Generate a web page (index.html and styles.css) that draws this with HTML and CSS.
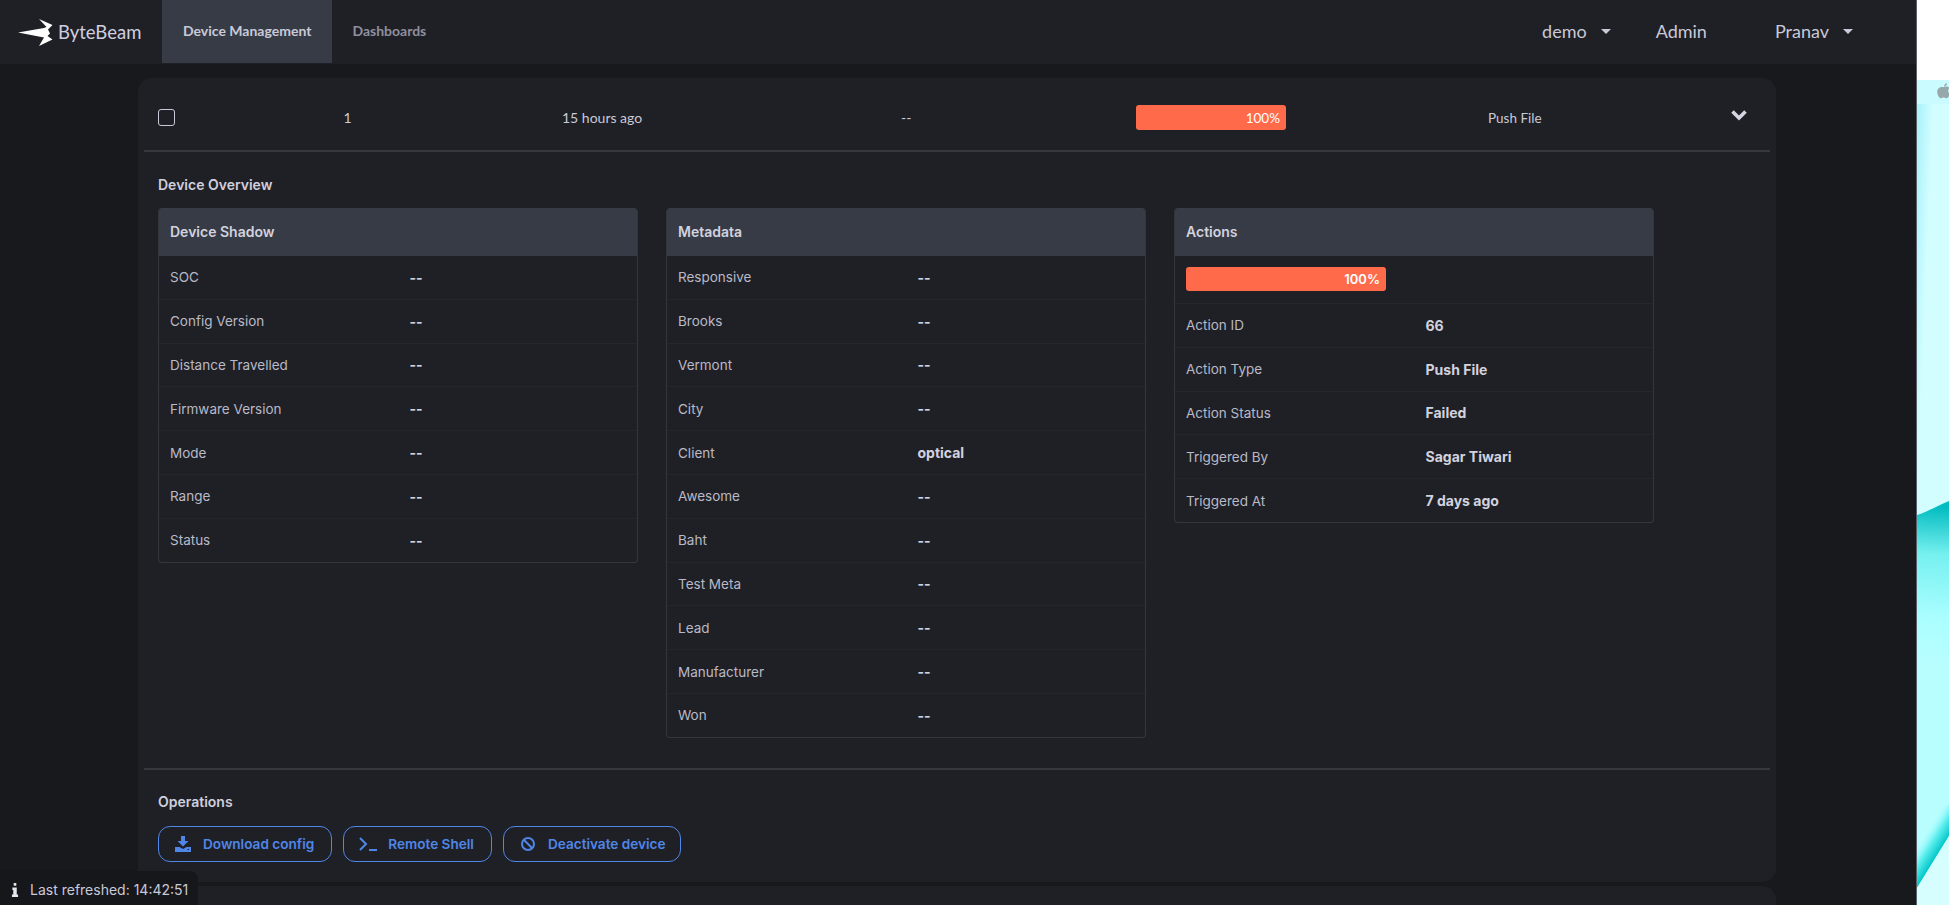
FILE: index.html
```html
<!DOCTYPE html>
<html lang="en">
<head>
<meta charset="utf-8">
<title>ByteBeam</title>
<link rel="stylesheet" href="styles.css">
</head>
<body>
<div class="app">
  <header class="nav">
    <div class="brand">
      <svg class="logo" viewBox="18 18 35 27" width="35" height="27"><path fill="#fff" d="M18 31.500 L44 27 L46.500 26 L39 18 L52.500 24 L48 28.500 L50 32.500 L47.500 35 L52.500 38.500 L39 45 L44 36.500 Z"/></svg>
      <span class="brand-name">ByteBeam</span>
    </div>
    <a class="tab tab-active">Device Management</a>
    <a class="tab">Dashboards</a>
    <div class="nav-right">
      <span class="menu menu-demo">demo<i class="caret"></i></span>
      <span class="menu menu-admin">Admin</span>
      <span class="menu menu-user">Pranav<i class="caret"></i></span>
    </div>
  </header>
  <main class="content">
    <section class="card">
      <div class="row-head">
        <span class="cell cell-check"><span class="checkbox"></span></span>
        <span class="cell cell-id">1</span>
        <span class="cell cell-time">15 hours ago</span>
        <span class="cell cell-dash">--</span>
        <span class="cell cell-prog"><span class="bar bar-small"><span>100%</span></span></span>
        <span class="cell cell-type">Push File</span>
        <span class="cell cell-chev"><svg viewBox="0 0 16 12" width="16" height="12"><path d="M1.500 2.500 L8 9 L14.500 2.500" fill="none" stroke="#d5d5e3" stroke-width="3.600"/></svg></span>
      </div>
      <div class="overview">
        <h3 class="heading">Device Overview</h3>
        <div class="tables">
          <div class="tbl">
            <div class="tbl-head">Device Shadow</div>
            <div class="tr"><span class="k">SOC</span><span class="v">--</span></div>
            <div class="tr"><span class="k">Config Version</span><span class="v">--</span></div>
            <div class="tr"><span class="k">Distance Travelled</span><span class="v">--</span></div>
            <div class="tr"><span class="k">Firmware Version</span><span class="v">--</span></div>
            <div class="tr"><span class="k">Mode</span><span class="v">--</span></div>
            <div class="tr"><span class="k">Range</span><span class="v">--</span></div>
            <div class="tr"><span class="k">Status</span><span class="v">--</span></div>
          </div>
          <div class="tbl">
            <div class="tbl-head">Metadata</div>
            <div class="tr"><span class="k">Responsive</span><span class="v">--</span></div>
            <div class="tr"><span class="k">Brooks</span><span class="v">--</span></div>
            <div class="tr"><span class="k">Vermont</span><span class="v">--</span></div>
            <div class="tr"><span class="k">City</span><span class="v">--</span></div>
            <div class="tr"><span class="k">Client</span><span class="v">optical</span></div>
            <div class="tr"><span class="k">Awesome</span><span class="v">--</span></div>
            <div class="tr"><span class="k">Baht</span><span class="v">--</span></div>
            <div class="tr"><span class="k">Test Meta</span><span class="v">--</span></div>
            <div class="tr"><span class="k">Lead</span><span class="v">--</span></div>
            <div class="tr"><span class="k">Manufacturer</span><span class="v">--</span></div>
            <div class="tr"><span class="k">Won</span><span class="v">--</span></div>
          </div>
          <div class="tbl">
            <div class="tbl-head">Actions</div>
            <div class="tr tr-bar"><span class="bar bar-large"><span>100%</span></span></div>
            <div class="tr"><span class="k">Action ID</span><span class="v">66</span></div>
            <div class="tr"><span class="k">Action Type</span><span class="v">Push File</span></div>
            <div class="tr"><span class="k">Action Status</span><span class="v">Failed</span></div>
            <div class="tr"><span class="k">Triggered By</span><span class="v">Sagar Tiwari</span></div>
            <div class="tr"><span class="k">Triggered At</span><span class="v">7 days ago</span></div>
          </div>
        </div>
      </div>
      <div class="operations">
        <h3 class="heading">Operations</h3>
        <div class="btns">
          <button class="btn"><svg viewBox="0 0 16 16" width="16" height="16"><path fill="#4f86e8" fill-rule="evenodd" d="M6 0h4v5h3.500L8 10.500 2.500 5H6zM0 11h4.500L8 13l3.500-2H16v5H0zM12.500 13h1.500v1h-1.500z"/></svg>Download config</button>
          <button class="btn btn-shell"><svg viewBox="0 0 18 16" width="18" height="16"><path fill="none" stroke="#4f86e8" stroke-width="2" d="M1 2l6 6-6 6M10 14h8"/></svg>Remote Shell</button>
          <button class="btn btn-ban"><svg viewBox="0 0 16 16" width="16" height="16"><circle cx="8" cy="8" r="6" fill="none" stroke="#4f86e8" stroke-width="2"/><path stroke="#4f86e8" stroke-width="2" d="M4 4l8 8"/></svg>Deactivate device</button>
        </div>
      </div>
    </section>
    <section class="card-next"></section>
  </main>
  <div class="toast"><svg viewBox="0 0 8 16" width="8" height="14"><path fill="#e6e6ee" d="M2.500 0h3v3h-3zM1 5h5v8h1.500v3H.5v-3H2V8H1z"/></svg><span>Last refreshed: 14:42:51</span></div>
</div>
<aside class="desktop">
  <div class="desk-top"></div>
  <div class="desk-bar"><svg viewBox="0 0 16 20" width="14" height="17"><path fill="#97a8aa" d="M8 5c2-1.500 5-1.500 6.500 1-2.500 2-2 5.500.8 6.800-1 2.700-3 5.200-4.800 5-1.300-.2-1.700-.8-3-.8s-1.700.8-3 .8C2 18 0 13 0 10c0-4 4.500-6.500 8-5zM8 4.500C8 2.500 9.500.5 11.500 0c.2 2-1.500 4.200-3.500 4.500z"/></svg></div>
  <svg class="desk-art" viewBox="0 0 32 801" width="32" height="801">
    <defs>
      <linearGradient id="sky" x1="0" y1="0" x2="0.5" y2="0.5"><stop offset="0" stop-color="#a6f1fa"/><stop offset="0.5" stop-color="#d2feff"/></linearGradient>
      <linearGradient id="wave" gradientUnits="userSpaceOnUse" x1="10" y1="402" x2="0" y2="560"><stop offset="0" stop-color="#02bcc0"/><stop offset="0.3" stop-color="#76f0f0"/><stop offset="0.7" stop-color="#aafeff"/><stop offset="1" stop-color="#b8feff"/></linearGradient>
      <linearGradient id="edge" gradientUnits="userSpaceOnUse" x1="16" y1="758" x2="-3" y2="746"><stop offset="0" stop-color="#00c6c8"/><stop offset="0.5" stop-color="#5eeeee"/><stop offset="1" stop-color="#aefeff" stop-opacity="0"/></linearGradient>
    </defs>
    <rect width="32" height="801" fill="url(#sky)"/>
    <path fill="url(#wave)" d="M0 411 C10 408 22 401 32 397 L32 732 L0 784 Z"/>
    <path fill="url(#edge)" d="M0 720 L32 700 L32 732 L0 784 Z"/>
    <path fill="#d6feff" d="M0 784 L32 732 L32 801 L0 801Z"/>
  </svg>
</aside>
</body>
</html>
```
FILE: styles.css
```css
* { box-sizing: border-box; }
html, body { margin: 0; height: 905px; overflow: hidden; }
body { display: flex; width: 1949px; background: #fff; font-family: "Inter", "Liberation Sans", sans-serif; color: #c9c9d8; }
.app { position: relative; width: 1917px; height: 905px; background: #18191d; border-right: 1px solid #5a6068; overflow: hidden; }
.nav { display: flex; align-items: stretch; height: 64px; background: #1f2025; font-family: "Lato", "Liberation Sans", sans-serif; }
.brand { width: 162px; display: flex; align-items: center; padding-left: 18px; }
.logo { flex: none; }
.brand-name { font-size: 18.500px; color: #cfcfe0; margin-left: 5px; padding-bottom: 1px; }
.tab { display: flex; align-items: center; padding: 0 21px 3px 20px; font-size: 14px; font-weight: 700; color: #8f8f9f; height: 63px; }
.tab-active { background: #373b45; color: #c9c9d8; padding: 0 21px 3px 21px; }
.nav-right { margin-left: auto; display: flex; align-items: center; padding-bottom: 2px; font-size: 18px; color: #c9c9d8; }
.menu { display: flex; align-items: center; }
.menu-demo { margin-right: 45px; }
.menu-admin { margin-right: 68px; }
.menu-user { margin-right: 63px; }
.caret { width: 0; height: 0; margin-left: 14px; border-left: 5px solid transparent; border-right: 5px solid transparent; border-top: 5px solid #c9c9d8; }
.content { padding: 14px 140px 0 138px; }
.card { background: #1f2025; border-radius: 14px; height: 804px; padding: 0 6px; }
.card-next { background: #1f2025; border-radius: 14px 14px 0 0; height: 40px; margin-top: 4px; }
.row-head { display: flex; align-items: center; height: 74px; padding-top: 7px; border-bottom: 2px solid #35373d; font-family: "Lato", "Liberation Sans", sans-serif; font-size: 14px; color: #c9c9d8; }
.cell { display: block; }
.cell-check { width: 199.500px; padding-left: 14px; }
.cell-id { width: 218.500px; }
.cell-time { width: 339px; }
.cell-dash { width: 235px; }
.cell-prog { width: 352px; }
.cell-type { width: 243px; font-size: 13.500px; }
.cell-chev { margin-bottom: 5px; }
.checkbox { display: block; width: 17px; height: 17px; border: 1.500px solid #c9c9d8; border-radius: 3px; }
.bar { display: flex; align-items: center; justify-content: flex-end; background: #ff6a4a; color: #fff; border-radius: 3px; font-weight: 500; }
.bar-small { width: 150px; height: 25px; padding-right: 6px; font-size: 13.500px; font-weight: 400; }
.bar-large { width: 200px; height: 24px; padding-right: 6px; font-size: 13px; font-family: "Inter", sans-serif; font-weight: 600; }
.overview { padding: 24px 0 0 14px; height: 616px; }
.heading { margin: 0; font-size: 14px; line-height: 18px; font-weight: 600; color: #cfcfde; }
.tables { display: flex; align-items: flex-start; gap: 28px; margin-top: 14px; }
.tbl { width: 480px; border: 1px solid #34363c; border-top: 0; border-radius: 4px; overflow: hidden; }
.tbl-head { height: 48px; display: flex; align-items: center; padding-left: 12px; padding-bottom: 1px; background: #373b45; font-size: 14px; font-weight: 600; color: #d2d2df; margin: 0 -1px; }
.tr { display: flex; align-items: center; height: 43.800px; padding-left: 11px; font-size: 13.500px; border-bottom: 1px solid #25262c; }
.tr:last-child { border-bottom: 0; height: 42.800px; }
.tr.tr-bar { height: 48px; padding-bottom: 2px; }
.k { width: 239.500px; color: #b9b9c8; }
.v { font-size: 14px; font-weight: 700; color: #d2d2df; }
.operations { border-top: 2px solid #35373d; padding: 23px 0 0 14px; }
.btns { display: flex; gap: 11px; margin-top: 15px; }
.btn { display: flex; align-items: center; gap: 12px; height: 36px; padding: 0 17px 0 16px; background: transparent; border: 1px solid #4f86e8; border-radius: 12px; color: #4f86e8; font-family: "Inter", "Liberation Sans", sans-serif; font-size: 13.600px; font-weight: 600; }
.btn-shell { gap: 11px; padding-left: 15px; }
.btn-ban { padding-right: 14px; }
.toast { position: absolute; left: 0; bottom: 0; width: 198px; height: 34px; background: #16171b; border-radius: 0 8px 0 0; display: flex; align-items: center; gap: 11px; padding: 3px 0 0 11px; font-size: 14px; color: #c9c9d8; }
.desktop { flex: 1; min-width: 0; height: 905px; display: flex; flex-direction: column; background: #fff; }
.desk-top { height: 80px; background: #fff; }
.desk-bar { height: 24px; background: #c9fbff; padding: 3px 0 0 20px; overflow: hidden; }
.desk-art { display: block; }
```
